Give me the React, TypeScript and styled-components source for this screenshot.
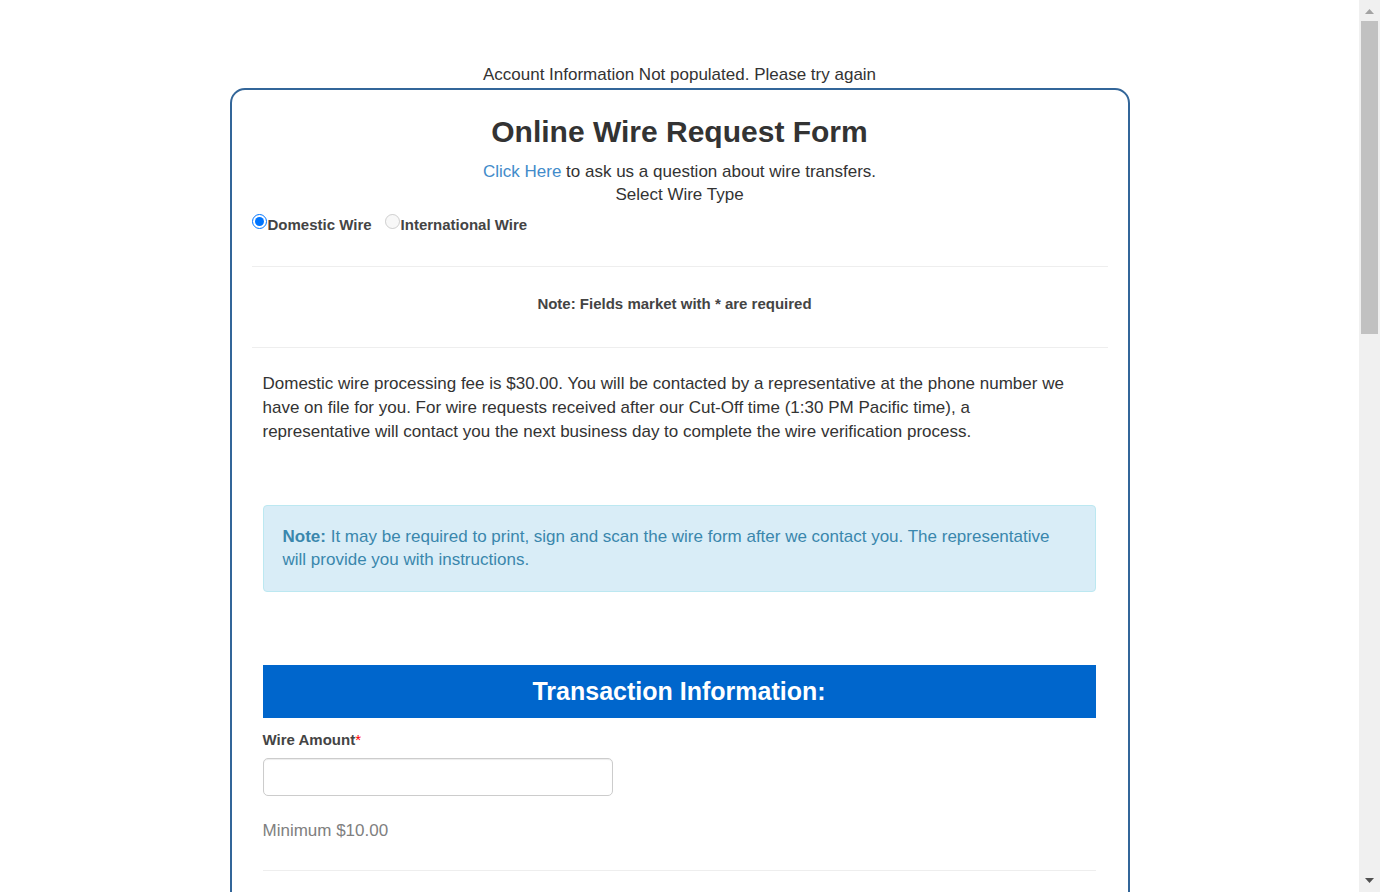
import React from "react";
import styled, { createGlobalStyle } from "styled-components";

const GlobalStyle = createGlobalStyle`
  *, *::before, *::after { box-sizing: border-box; }
  body {
    margin: 0;
    background: #fff;
    color: #333;
    font-family: "Liberation Sans", Arial, sans-serif;
    font-size: 17px;
    line-height: 23px;
  }
`;

const Window = styled.div`
  display: flex;
  height: 100vh;
  overflow: hidden;
`;

const Page = styled.main`
  flex: 1;
  min-width: 0;
  overflow: hidden;
  padding-top: 63px;
`;

const StatusMessage = styled.p`
  margin: 0;
  padding-bottom: 2px;
  text-align: center;
`;

const Card = styled.form`
  max-width: 900px;
  min-height: 100vh;
  margin: 0 auto;
  padding: 20px;
  border: 2px solid #336699;
  border-radius: 15px;
`;

const Title = styled.h1`
  margin: 0 0 6px;
  font-size: 30px;
  line-height: 44px;
  text-align: center;
`;

const Intro = styled.div`
  text-align: center;
`;

const Link = styled.a`
  color: #428bca;
  text-decoration: none;
`;

const WireTypes = styled.fieldset`
  display: flex;
  gap: 13px;
  margin: 0 0 30px;
  padding: 0;
  border: 0;
`;

const Legend = styled.legend`
  width: 100%;
  padding: 0;
  margin-bottom: 7px;
  text-align: center;
`;

const Choice = styled.label`
  display: flex;
  align-items: flex-start;
  color: #444;
  font-size: 15px;
  font-weight: bold;
`;

const Radio = styled.input`
  width: 15px;
  height: 15px;
  margin: 1px 1px 0 0;
`;

const Rule = styled.hr`
  height: 1px;
  margin: 0;
  border: 0;
  background: #eee;
`;

const RequiredNote = styled.p`
  margin: 0;
  padding: 25px 10px 32px 0;
  color: #444;
  font-size: 15px;
  font-weight: bold;
  text-align: center;
`;

const Body = styled.div`
  padding: 24px 12px 0 11px;
`;

const Fee = styled.p`
  margin: 0 0 61px;
  padding-right: 20px;
  line-height: 24px;
`;

const Alert = styled.div`
  margin-bottom: 73px;
  padding: 19px 19px 20px;
  border: 1px solid #bce8f1;
  border-radius: 4px;
  background: #d9edf7;
  color: #3a87ad;
`;

const SectionTitle = styled.h2`
  margin: 0 0 10px;
  background: #0066cc;
  color: #fff;
  font-size: 25px;
  line-height: 53px;
  text-align: center;
`;

const FieldLabel = styled.label`
  display: block;
  margin-bottom: 7px;
  color: #444;
  font-size: 15px;
  font-weight: bold;
`;

const Star = styled.span`
  color: #f00;
  font-weight: normal;
`;

const TextInput = styled.input`
  display: block;
  width: 350px;
  max-width: 100%;
  height: 38px;
  padding: 5px 8px;
  border: 1px solid #ccc;
  border-radius: 5px;
  box-shadow: inset 0 1px 1px rgba(0, 0, 0, 0.075);
  font: inherit;
`;

const Hint = styled.p`
  margin: 23px 0 28px;
  color: #808080;
`;

const ScrollTrack = styled.div`
  display: flex;
  flex-direction: column;
  width: 21px;
  padding: 0 2px;
  background: #f0f0f0;
`;

const ScrollArrow = styled.svg`
  display: block;
  width: 17px;
  height: 21px;
`;

const ScrollTrough = styled.div`
  flex: 1;
`;

const ScrollThumb = styled.div`
  height: 36.8%;
  background: #c1c1c1;
`;

export default function App() {
  return (
    <>
      <GlobalStyle />
      <Window>
        <Page>
          <StatusMessage>Account Information Not populated. Please try again</StatusMessage>
          <Card>
            <Title>Online Wire Request Form</Title>
            <Intro>
              <Link href="#question">Click Here</Link> to ask us a question about wire transfers.
            </Intro>
            <WireTypes>
              <Legend>Select Wire Type</Legend>
              <Choice>
                <Radio type="radio" name="wireType" value="domestic" defaultChecked />
                Domestic Wire
              </Choice>
              <Choice>
                <Radio type="radio" name="wireType" value="international" disabled />
                International Wire
              </Choice>
            </WireTypes>
            <Rule />
            <RequiredNote>Note: Fields market with * are required</RequiredNote>
            <Rule />
            <Body>
              <Fee>
                Domestic wire processing fee is $30.00. You will be contacted by a representative at
                the phone number we have on file for you. For wire requests received after our
                Cut-Off time (1:30 PM Pacific time), a representative will contact you the next
                business day to complete the wire verification process.
              </Fee>
              <Alert role="note">
                <strong>Note:</strong> It may be required to print, sign and scan the wire form
                after we contact you. The representative will provide you with instructions.
              </Alert>
              <SectionTitle>Transaction Information:</SectionTitle>
              <FieldLabel htmlFor="wire-amount">
                Wire Amount<Star>*</Star>
              </FieldLabel>
              <TextInput id="wire-amount" name="wireAmount" type="text" />
              <Hint>Minimum $10.00</Hint>
              <Rule />
            </Body>
          </Card>
        </Page>
        <ScrollTrack aria-hidden="true">
          <ScrollArrow viewBox="0 0 17 21">
            <path d="M4 14 8.500 9 13 14Z" fill="#a3a3a3" />
          </ScrollArrow>
          <ScrollTrough>
            <ScrollThumb />
          </ScrollTrough>
          <ScrollArrow viewBox="0 0 17 21">
            <path d="M4 7 8.500 12 13 7Z" fill="#505050" />
          </ScrollArrow>
        </ScrollTrack>
      </Window>
    </>
  );
}
